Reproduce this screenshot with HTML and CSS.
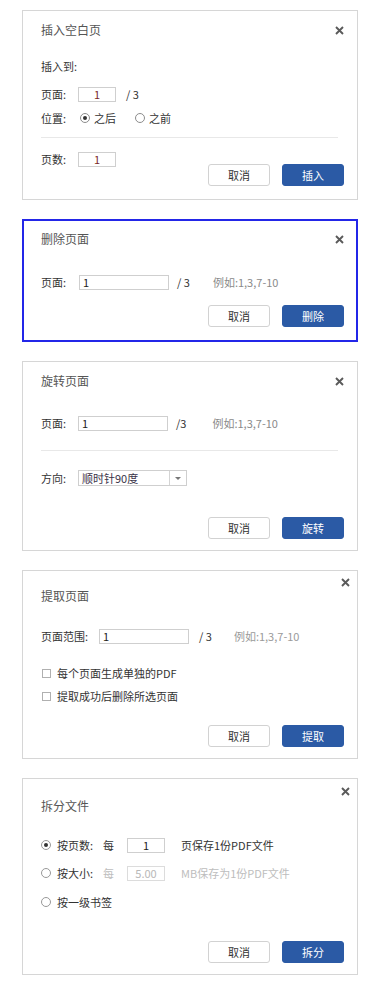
FILE: index.html
```html
<!doctype html>
<html>
	<head>
		<meta charset="utf-8"/>
		<title>PDF 页面工具</title>
		<link rel="stylesheet" href="styles.css">
	</head>
	<body>
		<div class="page">

			<section class="dlg dlg-insert">
				<div class="head">
					<h2 class="title">插入空白页</h2>
					<span class="close"><svg width="9" height="9" viewBox="0 0 9 9"><path d="M1 1L8 8M8 1L1 8" stroke="#5a5a5a" stroke-width="1.9"/></svg></span>
				</div>
				<div class="row ins-to">插入到:</div>
				<div class="row ins-page">
					<span class="lbl">页面:</span>
					<input class="field short red" value="1">
					<span class="total">/ 3</span>
				</div>
				<div class="row ins-pos">
					<span class="lbl">位置:</span>
					<span class="radio on"></span><span class="opt">之后</span>
					<span class="radio second"></span><span class="opt">之前</span>
				</div>
				<div class="divider ins-div"></div>
				<div class="foot ins-foot">
					<div class="row">
						<span class="lbl">页数:</span>
						<input class="field short red" value="1">
					</div>
					<div class="btns">
						<button class="btn">取消</button>
						<button class="btn primary">插入</button>
					</div>
				</div>
			</section>

			<section class="dlg dlg-delete">
				<div class="head">
					<h2 class="title">删除页面</h2>
					<span class="close"><svg width="9" height="9" viewBox="0 0 9 9"><path d="M1 1L8 8M8 1L1 8" stroke="#5a5a5a" stroke-width="1.9"/></svg></span>
				</div>
				<div class="row del-page">
					<span class="lbl">页面:</span>
					<input class="field wide" value="1">
					<span class="total">/ 3</span>
					<span class="hint">例如:1,3,7-10</span>
				</div>
				<div class="foot del-foot">
					<div class="btns">
						<button class="btn">取消</button>
						<button class="btn primary">删除</button>
					</div>
				</div>
			</section>

			<section class="dlg dlg-rotate">
				<div class="head">
					<h2 class="title">旋转页面</h2>
					<span class="close"><svg width="9" height="9" viewBox="0 0 9 9"><path d="M1 1L8 8M8 1L1 8" stroke="#5a5a5a" stroke-width="1.9"/></svg></span>
				</div>
				<div class="row rot-page">
					<span class="lbl">页面:</span>
					<input class="field wide" value="1">
					<span class="total">/3</span>
					<span class="hint">例如:1,3,7-10</span>
				</div>
				<div class="divider rot-div"></div>
				<div class="row rot-dir">
					<span class="lbl">方向:</span>
					<div class="select">
						<span class="sel-val">顺时针90度</span>
						<span class="sel-arrow"></span>
					</div>
				</div>
				<div class="foot rot-foot">
					<div class="btns">
						<button class="btn">取消</button>
						<button class="btn primary">旋转</button>
					</div>
				</div>
			</section>

			<section class="dlg dlg-extract">
				<div class="close-row ext-close">
					<span class="close"><svg width="9" height="9" viewBox="0 0 9 9"><path d="M1 1L8 8M8 1L1 8" stroke="#5a5a5a" stroke-width="1.9"/></svg></span>
				</div>
				<h2 class="title ext-title">提取页面</h2>
				<div class="row ext-page">
					<span class="lbl lbl-long">页面范围:</span>
					<input class="field wide" value="1">
					<span class="total">/ 3</span>
					<span class="hint">例如:1,3,7-10</span>
				</div>
				<div class="row ext-cb1"><span class="check"></span>每个页面生成单独的PDF</div>
				<div class="row ext-cb2"><span class="check"></span>提取成功后删除所选页面</div>
				<div class="foot ext-foot">
					<div class="btns">
						<button class="btn">取消</button>
						<button class="btn primary">提取</button>
					</div>
				</div>
			</section>

			<section class="dlg dlg-split">
				<div class="close-row spl-close">
					<span class="close"><svg width="9" height="9" viewBox="0 0 9 9"><path d="M1 1L8 8M8 1L1 8" stroke="#5a5a5a" stroke-width="1.9"/></svg></span>
				</div>
				<h2 class="title spl-title">拆分文件</h2>
				<div class="row spl-r1">
					<span class="radio on lead"></span>
					<span class="spl-lbl">按页数:</span>
					<span class="every">每</span>
					<input class="field short" value="1">
					<span class="unit">页保存1份PDF文件</span>
				</div>
				<div class="row spl-r2">
					<span class="radio lead"></span>
					<span class="spl-lbl">按大小:</span>
					<span class="every off">每</span>
					<input class="field short off" value="5.00">
					<span class="unit off">MB保存为1份PDF文件</span>
				</div>
				<div class="row spl-r3">
					<span class="radio lead"></span>
					<span>按一级书签</span>
				</div>
				<div class="foot spl-foot">
					<div class="btns">
						<button class="btn">取消</button>
						<button class="btn primary">拆分</button>
					</div>
				</div>
			</section>

		</div>
	</body>
</html>
```

FILE: styles.css
```css
body {
	margin: 0;
	background-color: #fff;
	color: #333;
	font-family: "Noto Sans CJK SC", "Noto Sans", sans-serif;
	font-size: 11px;
}
body * {
	box-sizing: border-box;
}

.page {
	display: flex;
	flex-direction: column;
	gap: 19px;
	padding: 10px 0 0 22px;
}

/* dialog frame */
.dlg {
	width: 336px;
	display: flex;
	flex-direction: column;
	border: 1px solid #d6d6d6;
	background-color: #fff;
	padding: 0 13px 11px 18px;
}
.dlg-delete {
	border: 2px solid #2326e8;
	padding: 0 12px 13px 17px;
}
.dlg-insert {
	padding-bottom: 13px;
}

.head {
	display: flex;
	align-items: center;
	justify-content: space-between;
	height: 20px;
	margin-top: 9px;
}
.dlg-delete .head {
	margin-top: 8px;
}
.title {
	margin: 0;
	font-size: 12px;
	font-weight: normal;
	color: #555;
	line-height: 16px;
}
.close {
	display: flex;
	width: 9px;
	height: 9px;
}
.close-row {
	display: flex;
	justify-content: flex-end;
	align-items: center;
	height: 10px;
	margin-right: -6px;
}

.row {
	display: flex;
	align-items: center;
	height: 20px;
	line-height: 20px;
	white-space: nowrap;
}
.lbl {
	width: 37px;
	flex: none;
}
.lbl-long {
	width: 58px;
}

.field {
	height: 15px;
	border: 1px solid #cfcfcf;
	background-color: #fff;
	font-family: inherit;
	font-size: 11px;
	color: #222;
	padding: 0 3px;
	margin: 0;
	outline: none;
	line-height: 13px;
}
.field.short {
	width: 38px;
	text-align: center;
}
.field.wide {
	width: 90px;
}
.field.red {
	color: #7b2a2a;
}
.field.off {
	color: #b8b8b8;
	border-color: #dcdcdc;
}
.total {
	margin-left: 10px;
}
.dlg-delete .total, .dlg-rotate .total {
	margin-left: 8px;
}
.hint {
	margin-left: 23px;
	color: #8a8a8a;
}
.dlg-rotate .hint {
	margin-left: 26px;
}
.dlg-extract .hint {
	margin-left: 22px;
	color: #9a9a9a;
}

.divider {
	height: 1px;
	background-color: #e8e8e8;
	margin-right: 6px;
}

/* radio + checkbox */
.radio {
	width: 10px;
	height: 10px;
	flex: none;
	border: 1px solid #8c8c8c;
	border-radius: 50%;
	display: flex;
	align-items: center;
	justify-content: center;
	margin-left: 1px;
	margin-right: 4px;
}
.radio.on::after {
	content: "";
	width: 4px;
	height: 4px;
	border-radius: 50%;
	background-color: #333;
}
.radio.second {
	margin-left: 19px;
}
.radio.lead {
	margin-left: 0;
	margin-right: 6px;
	border-color: #999;
}
.check {
	width: 9px;
	height: 9px;
	flex: none;
	border: 1px solid #b0b0b0;
	margin-left: 1px;
	margin-right: 6px;
}

/* select */
.select {
	display: flex;
	width: 109px;
	height: 16px;
	border: 1px solid #cfcfcf;
}
.sel-val {
	flex: 1;
	padding-left: 3px;
	line-height: 14px;
	color: #3a3348;
}
.sel-arrow {
	width: 17px;
	border-left: 1px solid #d4d4d4;
	display: flex;
	align-items: center;
	justify-content: center;
}
.sel-arrow::after {
	content: "";
	border-left: 3px solid transparent;
	border-right: 3px solid transparent;
	border-top: 3px solid #777;
}

/* footer buttons */
.foot {
	display: flex;
	align-items: flex-start;
}
.btns {
	display: flex;
	gap: 12px;
	margin-left: auto;
}
.btn {
	width: 62px;
	height: 22px;
	border: 1px solid #d2d2d2;
	border-radius: 3px;
	background-color: #fff;
	color: #333;
	font-family: inherit;
	font-size: 11px;
	padding: 0;
	cursor: pointer;
}
.btn.primary {
	background-color: #2b5aa5;
	border-color: #2b5aa5;
	color: #fff;
}

/* insert */
.ins-to { margin-top: 16px; }
.ins-page { margin-top: 8px; }
.ins-pos { margin-top: 4px; }
.ins-div { margin-top: 9px; }
.ins-foot { margin-top: 11px; }
.ins-foot .btns { margin-top: 15px; }
.ins-pos .lbl { width: 38px; }

/* delete */
.del-page { margin-top: 23px; }
.del-page .lbl { width: 38px; }
.del-foot { margin-top: 13px; }

/* rotate */
.rot-page { margin-top: 22px; }
.rot-div { margin-top: 17px; }
.rot-dir { margin-top: 17px; }
.rot-foot { margin-top: 29px; }

/* extract */
.ext-close { margin-top: 6px; }
.ext-title { margin-top: 1px; }
.ext-page { margin-top: 22px; }
.ext-cb1 { margin-top: 17px; }
.ext-cb2 { margin-top: 3px; }
.ext-foot { margin-top: 19px; }

/* split */
.spl-close { margin-top: 7px; }
.spl-title { margin-top: 2px; }
.spl-r1 { margin-top: 21px; }
.spl-r2 { margin-top: 8px; }
.spl-r3 { margin-top: 9px; }
.spl-foot { margin-top: 29px; }
.spl-lbl {
	width: 46px;
	flex: none;
}
.every {
	width: 24px;
	flex: none;
}
.unit {
	margin-left: 16px;
}
.off {
	color: #bdbdbd;
}
```
